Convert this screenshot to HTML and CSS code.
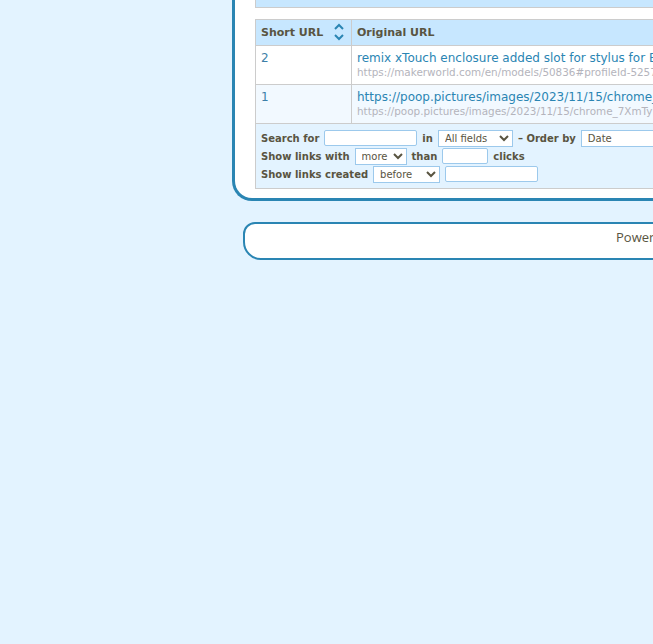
FILE: index.html
```html
<!DOCTYPE html>
<html lang="en">
<head>
  <meta charset="UTF-8" />
  <title>YOURLS &raquo; Admin interface</title>
  <link rel="stylesheet" href="styles.css">
</head>
<body>
  <div class="wrap">
    <div class="prev-box"></div>

    <table class="links">
      <thead>
        <tr>
          <th class="col-short">Short URL<svg class="sort" width="10" height="18" viewBox="0 0 10 18"><polyline points="1,6 5,2 9,6" /><polyline points="1,12 5,16 9,12" /></svg></th>
          <th>Original URL</th>
        </tr>
      </thead>
      <tbody>
        <tr>
          <td class="keyword"><a href="#">2</a></td>
          <td class="url">
            <a href="#">remix xTouch enclosure added slot for stylus for Bambu Lab X1 - MakerWorld</a>
            <small>https://makerworld.com/en/models/50836#profileId-52573</small>
          </td>
        </tr>
        <tr class="alt">
          <td class="keyword"><a href="#">1</a></td>
          <td class="url">
            <a href="#">https://poop.pictures/images/2023/11/15/chrome_7XmTyH2bQk.png</a>
            <small>https://poop.pictures/images/2023/11/15/chrome_7XmTyH2bQk.png</small>
          </td>
        </tr>
      </tbody>
      <tfoot>
        <tr>
          <td colspan="2" class="filters">
            <div class="line">
              <label>Search for</label>
              <input type="text" class="txt wide">
              <label>in</label>
              <select class="sel fields"><option>All fields</option></select>
              <label>&ndash; Order by</label>
              <select class="sel order"><option>Date</option></select>
            </div>
            <div class="line">
              <label>Show links with</label>
              <select class="sel more"><option>more</option></select>
              <label>than</label>
              <input type="text" class="txt short">
              <label>clicks</label>
            </div>
            <div class="line">
              <label>Show links created</label>
              <select class="sel before"><option>before</option></select>
              <input type="text" class="txt wide">
            </div>
          </td>
        </tr>
      </tfoot>
    </table>
  </div>

  <div class="footer">
    <p>Powered by YOURLS v 1.9.2</p>
  </div>
</body>
</html>
```

FILE: styles.css
```css
html {
  overflow: hidden;
  background: #e3f3ff;
}
body {
  margin: 0;
  font-family: "DejaVu Sans", Verdana, sans-serif;
  font-size: 12px;
  color: #595441;
  background: #e3f3ff;
}
a {
  color: #2a85b3;
  text-decoration: none;
}
.wrap {
  margin-left: 232px;
  width: 1000px;
  background: #fff;
  border-left: 3px solid #2a85b3;
  border-bottom: 3px solid #2a85b3;
  border-bottom-left-radius: 20px;
  padding: 0 0 9px 20px;
}
.prev-box {
  height: 7px;
  width: 900px;
  background: #c7e7ff;
  border: 1px solid #ccc;
  border-top: 0;
  margin-bottom: 11px;
}
.links {
  width: 900px;
  border-collapse: collapse;
  border: 1px solid #ccc;
}
.links th,
.links td {
  border: 1px solid #ccc;
  text-align: left;
}
.links th {
  background: #c7e7ff;
  font-size: 11px;
  font-weight: bold;
  height: 26px;
  padding: 0 5px;
  box-sizing: border-box;
}
.col-short {
  width: 96px;
}
.sort {
  vertical-align: middle;
  margin-left: 11px;
  margin-top: -2px;
}
.sort polyline {
  fill: none;
  stroke: #2a85b3;
  stroke-width: 2;
}
.links td {
  vertical-align: top;
  padding: 5px 5px 5px;
  line-height: 15px;
}
.keyword a {
  color: #3d7fa8;
}
.url {
  white-space: nowrap;
}
.url small {
  display: block;
  font-size: 10.4px;
  line-height: 13px;
  color: #b4b4bc;
}
.alt td {
  background: #f2f9ff;
}
.links .filters {
  background: #e3f3ff;
  padding: 5px 5px 5px;
  font-size: 10px;
}
.line {
  display: flex;
  align-items: center;
  gap: 5px;
  height: 18px;
}
.line label {
  font-weight: bold;
}
.txt {
  height: 16px;
  box-sizing: border-box;
  border: 1px solid #9cc9ec;
  border-radius: 2px;
  background: #fff;
  padding: 0 3px;
  font-size: 10px;
}
.txt.wide {
  width: 93px;
}
.txt.short {
  width: 46px;
}
.sel {
  height: 17px;
  box-sizing: border-box;
  border: 1px solid #9cc9ec;
  border-radius: 0;
  background: #fff;
  color: #595441;
  font-family: "DejaVu Sans", Verdana, sans-serif;
  font-size: 10px;
  padding: 0 2px;
}
.sel.fields {
  width: 75px;
}
.sel.order {
  width: 90px;
}
.sel.more {
  width: 52px;
}
.sel.before {
  width: 67px;
}
.footer {
  margin: 21px 0 0 243px;
  width: 900px;
  background: #fff;
  border: 2px solid #2a85b3;
  border-radius: 12px 0 0 18px;
  padding: 5px 0 13px;
}
.footer p {
  margin: 0;
  padding-left: 371px;
  font-family: "Open Sans", sans-serif;
  font-size: 13px;
  line-height: 16px;
}
```
